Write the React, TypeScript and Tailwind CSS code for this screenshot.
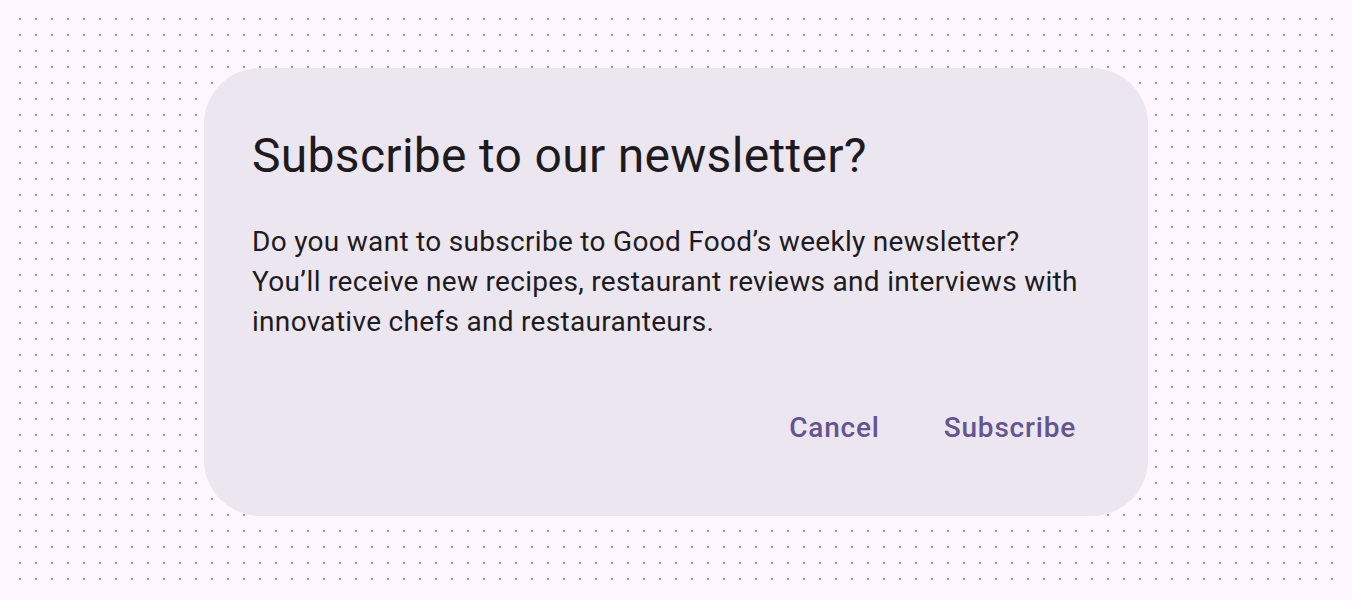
export default function App() {
  return (
    <div className="w-full h-[600px] bg-[#fef7ff] pl-[12px] pt-[11px] font-['Roboto',sans-serif]">
      <div className="w-[1328px] h-[576px] bg-[radial-gradient(circle,#9f9aa2_1px,transparent_1.4px)] bg-[size:16px_16px] pt-[57px] pl-[192px]">
        <div className="w-[944px] h-[448px] rounded-[56px] bg-[#ece6f0] px-12 pt-[56px] flex flex-col">
          <h2 className="text-[48px] leading-[64px] tracking-[0.3px] text-[#1d1b20] font-normal">
            Subscribe to our newsletter?
          </h2>
          <p className="mt-[34px] text-[28px] leading-[40px] tracking-[0.3px] text-[#1d1b20]">
            Do you want to subscribe to Good Food’s weekly newsletter?
            <br />
            You’ll receive new recipes, restaurant reviews and interviews with
            <br />
            innovative chefs and restauranteurs.
          </p>
          <div className="mt-auto mb-12 flex justify-end gap-4">
            <button className="h-20 px-6 text-[28px] font-medium tracking-[0.8px] text-[#65558f]">
              Cancel
            </button>
            <button className="h-20 px-6 text-[28px] font-medium tracking-[0.8px] text-[#65558f]">
              Subscribe
            </button>
          </div>
        </div>
      </div>
    </div>
  );
}
